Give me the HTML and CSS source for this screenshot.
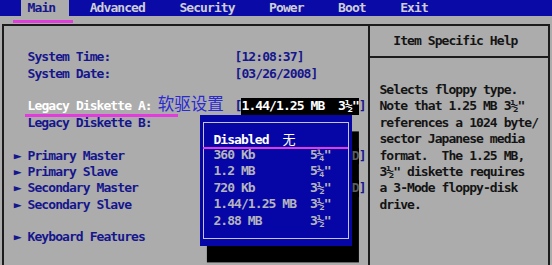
FILE: index.html
```html
<!DOCTYPE html>
<html>
<head>
<meta charset="utf-8">
<link rel="stylesheet" href="styles.css">
</head>
<body>
<div class="screen">
  <div class="menubar">   <span class="tab"> Main  </span>   Advanced     Security     Power     Boot     Exit</div>
  <div class="frame">
    <div class="main">
      <div class="row"></div>
      <div class="row">   System Time:                  [12:08:37]</div>
      <div class="row">   System Date:                  [03/26/2008]</div>
      <div class="row"></div>
      <div class="row">   <span class="sel">Legacy Diskette A:</span><span class="note">软驱设置</span>[<span class="value-hl">1.44/1.25 MB  3½"</span>]</div>
      <div class="row">   Legacy Diskette B:            [Disabled]</div>
      <div class="row"></div>
      <div class="row"> ► Primary Master                [VMware Virtual I<span class="shaded">D</span>]</div>
      <div class="row"> ► Primary Slave                 [None]</div>
      <div class="row"> ► Secondary Master              [VMware Virtual I<span class="shaded">D</span>]</div>
      <div class="row"> ► Secondary Slave               [None]</div>
      <div class="row"></div>
      <div class="row"> ► Keyboard Features</div>
      <div class="row"></div>
      <div class="row">   System Memory:                640 KB</div>
    </div>
    <div class="help">
      <div class="help-title"><div class="row">Item Specific Help</div></div>
      <div class="help-body">
        <div class="row">Selects floppy type.</div>
        <div class="row">Note that 1.25 MB 3½"</div>
        <div class="row">references a 1024 byte/</div>
        <div class="row">sector Japanese media</div>
        <div class="row">format.  The 1.25 MB,</div>
        <div class="row">3½" diskette requires</div>
        <div class="row">a 3-Mode floppy-disk</div>
        <div class="row">drive.</div>
      </div>
    </div>
  </div>
  <div class="popup">
    <div class="popup-inner">
      <div class="row cur">Disabled  <span class="cjk-small">无</span></div>
      <div class="row">360 Kb        5¼"</div>
      <div class="row">1.2 MB        5¼"</div>
      <div class="row">720 Kb        3½"</div>
      <div class="row">1.44/1.25 MB  3½"</div>
      <div class="row">2.88 MB       3½"</div>
    </div>
  </div>
  <div class="mark mark-main"></div>
  <div class="mark mark-legacy"></div>
  <div class="mark mark-disabled"></div>
</div>
</body>
</html>
```
FILE: styles.css
```css
:root {
  --cw: 6.9px;
  --rh: 16.4px;
  --bg: #acacac;
  --ink: #16168c;
  --line: #1c1c1c;
}
* { box-sizing: border-box; }
html, body { margin: 0; padding: 0; }
body {
  width: 552px;
  height: 265px;
  overflow: hidden;
  background: var(--bg);
  font-family: "DejaVu Sans Mono", monospace;
  font-weight: bold;
  font-size: 13px;
  letter-spacing: -0.927px;
  color: var(--ink);
}
.screen {
  position: relative;
  width: 552px;
  height: 265px;
  overflow: hidden;
}
.row {
  height: var(--rh);
  line-height: var(--rh);
  white-space: pre;
}
.menubar {
  height: var(--rh);
  line-height: var(--rh);
  background: #0a0aa6;
  color: #cdcdd6;
  white-space: pre;
}
.tab {
  display: inline-block;
  height: var(--rh);
  vertical-align: top;
  background: var(--bg);
  color: var(--ink);
}
.frame {
  margin: 7.2px 0 0 2.45px;
  width: 547.1px;
  height: 260px;
  border: 2px solid var(--line);
  display: grid;
  grid-template-columns: 363.7px 1fr;
}
.main {
  padding: 7.2px 0 0 2.45px;
  overflow: hidden;
}
.help {
  border-left: 2px solid var(--line);
  color: #141414;
}
.help-title {
  padding: 7.2px 0 7.2px 23.15px;
  border-bottom: 2px solid var(--line);
}
.help-body {
  padding: 23.6px 0 0 9.35px;
}
.sel { color: #ffffff; }
.value-hl {
  display: inline-block;
  height: var(--rh);
  vertical-align: top;
  background: #000;
  color: #fff;
}
.shaded {
  position: relative;
  z-index: 2;
  display: inline-block;
  height: var(--rh);
  vertical-align: top;
  background: #000;
  color: #5a5a62;
}
.note {
  display: inline-block;
  width: calc(var(--cw) * 12);
  height: var(--rh);
  padding-left: 6px;
  margin-top: -3px;
  vertical-align: top;
  font-family: "Noto Sans CJK SC", sans-serif;
  font-weight: normal;
  font-size: 16.5px;
  letter-spacing: 0;
  line-height: var(--rh);
  color: #2a2ad2;
}
.popup {
  position: absolute;
  z-index: 1;
  left: 200.1px;
  top: 114.8px;
  width: 151.8px;
  height: 131.2px;
  padding: 7.45px 2.7px;
  background: #0606a6;
  box-shadow: 6.9px 16.4px 0 #000;
  color: #b4b4bc;
}
.popup-inner {
  height: 100%;
  border: 1.5px solid #c4c4e0;
  padding: 7.45px 0 0 9.6px;
}
.cur { color: #ffffff; }
.cjk-small {
  font-family: "Noto Sans CJK SC", sans-serif;
  font-weight: normal;
  font-size: 13px;
  letter-spacing: 0;
}
.mark {
  position: absolute;
  z-index: 3;
  height: 2.5px;
  background: #e23cdc;
}
.mark-main { left: 13px; top: 20px; width: 60px; }
.mark-legacy { left: 25px; top: 114px; width: 153px; }
.mark-disabled { left: 203px; top: 146.5px; width: 145px; }
```
